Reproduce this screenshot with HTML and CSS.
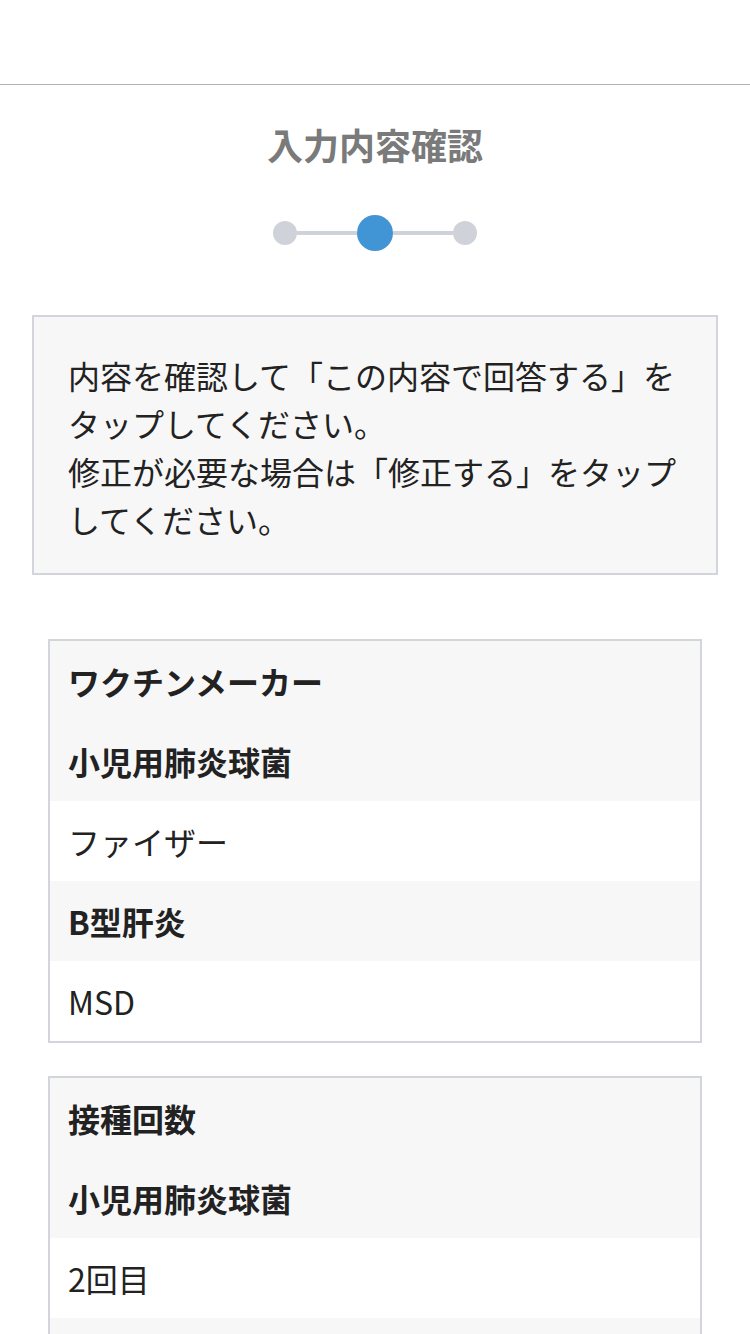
FILE: index.html
```html
<!DOCTYPE html>
<html lang="ja">
<head>
    <meta charset="UTF-8">
    <meta name="viewport" content="width=device-width, initial-scale=1.0">
    <title>入力内容確認</title>
    <link rel="stylesheet" href="styles.css">
</head>
<body>
    <header class="topbar"></header>

    <main class="page">
        <h1 class="page-title">入力内容確認</h1>

        <!-- 3ステップ中の2番目 -->
        <div class="stepper">
            <span class="step"></span>
            <span class="step-line"></span>
            <span class="step step-current"></span>
            <span class="step-line"></span>
            <span class="step"></span>
        </div>

        <div class="notice">
            <p>内容を確認して「この内容で回答する」をタップしてください。</p>
            <p>修正が必要な場合は「修正する」をタップしてください。</p>
        </div>

        <section class="card">
            <div class="row row-head">ワクチンメーカー</div>
            <div class="row row-head">小児用肺炎球菌</div>
            <div class="row">ファイザー</div>
            <div class="row row-head">B型肝炎</div>
            <div class="row">MSD</div>
        </section>

        <section class="card">
            <div class="row row-head">接種回数</div>
            <div class="row row-head">小児用肺炎球菌</div>
            <div class="row">2回目</div>
            <div class="row row-head">B型肝炎</div>
            <div class="row">1回目</div>
        </section>
    </main>
</body>
</html>
```

FILE: styles.css
```css
* {
    margin: 0;
    padding: 0;
    box-sizing: border-box;
}

body {
    font-family: "Noto Sans CJK JP", "Noto Sans", sans-serif;
    background: #fff;
    color: #222;
}

.topbar {
    height: 85px;
    border-bottom: 1px solid #b3b3b3;
    background: #fff;
}

.page {
    padding: 0 32px 40px;
}

.page-title {
    margin-top: 33px;
    text-align: center;
    font-size: 36px;
    line-height: 52px;
    font-weight: 700;
    color: #7a7a7a;
}

.stepper {
    display: flex;
    align-items: center;
    justify-content: center;
    margin-top: 45px;
    height: 36px;
}

.step {
    width: 24px;
    height: 24px;
    border-radius: 50%;
    background: #cfd2d9;
    flex-shrink: 0;
}

.step-current {
    width: 36px;
    height: 36px;
    background: #4195d5;
}

.step-line {
    width: 60px;
    height: 4px;
    background: #cfd2d9;
}

.notice {
    margin-top: 64px;
    background: #f7f7f7;
    border: 2px solid #d3d5dd;
    padding: 34px 34px 30px;
    font-size: 32px;
    line-height: 48px;
    color: #222;
}

.card {
    margin: 64px 16px 0;
    border: 2px solid #d3d5dd;
    background: #fff;
}

.card + .card {
    margin-top: 33px;
}

.row {
    height: 80px;
    display: flex;
    align-items: center;
    padding: 0 18px;
    font-size: 32px;
    color: #222;
}

.row-head {
    background: #f7f7f7;
    font-weight: 700;
}
```
